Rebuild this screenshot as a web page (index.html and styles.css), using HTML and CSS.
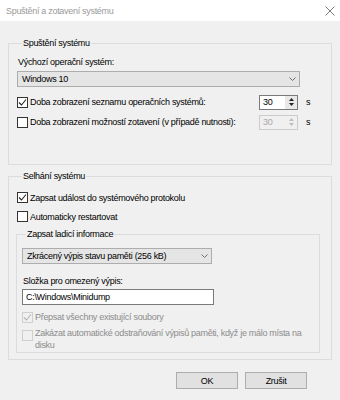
FILE: index.html
```html
<!DOCTYPE html>
<html lang="cs">
<head>
    <meta charset="UTF-8">
    <meta name="viewport" content="width=device-width, initial-scale=1.0">
    <title>Spuštění a zotavení systému</title>
    <link rel="stylesheet" href="styles.css">
</head>
<body>
    <div class="titlebar">
        <span class="title">Spuštění a zotavení systému</span>
        <svg class="close" width="10" height="10" viewBox="0 0 10 10">
            <path d="M0.5 0.5 L9.5 9.5 M9.5 0.5 L0.5 9.5" stroke="#7a7a7a" stroke-width="1" fill="none"/>
        </svg>
    </div>

    <div class="dialog">
        <fieldset class="group group-start">
            <legend>Spuštění systému</legend>
            <div class="label">Výchozí operační systém:</div>
            <div class="combo combo-wide">
                <span>Windows 10</span>
                <svg class="chevron" width="7" height="4" viewBox="0 0 7 4"><path d="M0.5 0.5 L3.5 3.5 L6.5 0.5" stroke="#6e6e6e" fill="none"/></svg>
            </div>
            <div class="row row-first">
                <span class="check checked"><svg width="9" height="9" viewBox="0 0 9 9"><path d="M1 4.5 L3.5 7 L8 1.5" stroke="#222" stroke-width="1.1" fill="none"/></svg></span>
                <span class="row-text">Doba zobrazení seznamu operačních systémů:</span>
                <div class="spin">
                    <span class="spin-value">30</span>
                    <span class="spin-btns">
                        <svg width="5" height="3" viewBox="0 0 5 3"><path d="M0 3 L2.5 0 L5 3 Z" fill="#222"/></svg>
                        <svg width="5" height="3" viewBox="0 0 5 3"><path d="M0 0 L2.5 3 L5 0 Z" fill="#222"/></svg>
                    </span>
                </div>
                <span class="unit">s</span>
            </div>
            <div class="row">
                <span class="check"></span>
                <span class="row-text">Doba zobrazení možností zotavení (v případě nutnosti):</span>
                <div class="spin disabled">
                    <span class="spin-value">30</span>
                    <span class="spin-btns">
                        <svg width="5" height="3" viewBox="0 0 5 3"><path d="M0 3 L2.5 0 L5 3 Z" fill="#bcbcbc"/></svg>
                        <svg width="5" height="3" viewBox="0 0 5 3"><path d="M0 0 L2.5 3 L5 0 Z" fill="#bcbcbc"/></svg>
                    </span>
                </div>
                <span class="unit">s</span>
            </div>
        </fieldset>

        <fieldset class="group group-fail">
            <legend>Selhání systému</legend>
            <div class="row row-tight">
                <span class="check checked"><svg width="9" height="9" viewBox="0 0 9 9"><path d="M1 4.5 L3.5 7 L8 1.5" stroke="#222" stroke-width="1.1" fill="none"/></svg></span>
                <span class="row-text">Zapsat událost do systémového protokolu</span>
            </div>
            <div class="row row-tight">
                <span class="check"></span>
                <span class="row-text">Automaticky restartovat</span>
            </div>

            <fieldset class="group group-debug">
                <legend>Zapsat ladicí informace</legend>
                <div class="combo combo-narrow">
                    <span>Zkrácený výpis stavu paměti (256 kB)</span>
                    <svg class="chevron" width="7" height="4" viewBox="0 0 7 4"><path d="M0.5 0.5 L3.5 3.5 L6.5 0.5" stroke="#6e6e6e" fill="none"/></svg>
                </div>
                <div class="label label-folder">Složka pro omezený výpis:</div>
                <div class="textbox">C:\Windows\Minidump</div>
                <div class="row row-small">
                    <span class="check disabled"><svg width="9" height="9" viewBox="0 0 9 9"><path d="M1 4.5 L3.5 7 L8 1.5" stroke="#b5b5b5" stroke-width="1.1" fill="none"/></svg></span>
                    <span class="row-text muted">Přepsat všechny existující soubory</span>
                </div>
                <div class="row row-multi">
                    <span class="check disabled"></span>
                    <span class="row-text muted">Zakázat automatické odstraňování výpisů paměti, když je málo místa na disku</span>
                </div>
            </fieldset>
        </fieldset>

        <div class="buttons">
            <button class="btn">OK</button>
            <button class="btn">Zrušit</button>
        </div>
    </div>
    <div class="bottom-edge"></div>
</body>
</html>
```

FILE: styles.css
```css
* {
    box-sizing: border-box;
}
body {
    margin: 0;
    width: 340px;
    height: 400px;
    overflow: hidden;
    background: #f0f0f0;
    font-family: "Liberation Sans", Arial, sans-serif;
    font-size: 9px;
    letter-spacing: -0.3px;
    color: #000;
}
.titlebar {
    height: 21px;
    background: #fff;
    display: flex;
    justify-content: space-between;
    align-items: center;
    padding: 0 5px 0 6px;
}
.title {
    color: #9a9a9a;
}
.close {
    display: block;
    margin-top: 1px;
}
.dialog {
    height: 377px;
    padding: 0 8px;
}

/* --- group boxes --- */
.group {
    margin: 0;
    border: 1px solid #dcdcdc;
    padding: 5px 8px 32px 8px;
    min-width: 0;
}
.group legend {
    margin-left: 5px;
    padding: 0 1px;
    line-height: 14px;
}
.group-start {
    margin-top: 15px;
}
.group-fail {
    margin-top: 4px;
    padding: 5px 8px 6px 8px;
}
.group-debug {
    margin: 1px 0 0 -1px;
    width: 304px;
    padding: 7px 5px 1px 5px;
}
.group-debug legend {
    margin-left: 4px;
}

.label {
    line-height: 15px;
    padding-left: 1px;
}
.label-folder {
    margin-top: 10px;
    line-height: 14px;
}

/* --- combo --- */
.combo {
    height: 16px;
    background: #e5e5e5;
    border: 1px solid #adadad;
    display: flex;
    align-items: center;
    justify-content: space-between;
    padding: 0 3px 0 4px;
    line-height: 14px;
}
.combo-wide {
    margin-top: 1px;
    width: 283px;
}
.combo-narrow {
    width: 190px;
}
.chevron {
    display: block;
}

/* --- checkbox rows --- */
.row {
    display: flex;
    align-items: center;
    height: 20px;
}
.row-first {
    margin-top: 5px;
}
.row-tight {
    height: 19px;
}
.row-small {
    height: 16px;
    margin-top: 4px;
}
.row-multi {
    height: auto;
    align-items: flex-start;
    margin-top: 2px;
}
.row-multi .row-text {
    line-height: 11.5px;
    padding-top: 1px;
}
.check {
    width: 11px;
    height: 11px;
    flex: none;
    border: 1px solid #333;
    background: #fff;
    display: flex;
    align-items: center;
    justify-content: center;
    margin-right: 2px;
}
.check.disabled {
    border-color: #cfcfcf;
    background: #f0f0f0;
}
.row-multi .check {
    margin-top: 3px;
}
.row-text {
    flex: 1;
    white-space: nowrap;
}
.row-multi .row-text {
    white-space: normal;
    padding-right: 12px;
}
.muted {
    color: #8c8c8c;
}

/* --- spin box --- */
.spin {
    width: 39px;
    height: 15px;
    border: 1px solid #7a7a7a;
    background: #fff;
    display: flex;
    flex: none;
}
.spin-value {
    flex: 1;
    padding-left: 3px;
    line-height: 13px;
}
.spin-btns {
    width: 12px;
    background: #e8e8e8;
    display: flex;
    flex-direction: column;
    align-items: center;
    justify-content: space-around;
    padding: 1px 0;
}
.spin-btns svg {
    display: block;
}
.spin.disabled {
    border-color: #cccccc;
    background: #f0f0f0;
    color: #a8a8a8;
}
.spin.disabled .spin-btns {
    background: #f0f0f0;
}
.unit {
    width: 25px;
    padding-left: 8px;
    flex: none;
}

/* --- textbox --- */
.textbox {
    width: 192px;
    height: 16px;
    margin-top: 1px;
    border: 1px solid #7a7a7a;
    background: #fff;
    padding-left: 3px;
    line-height: 14px;
}

/* --- buttons --- */
.buttons {
    display: flex;
    justify-content: flex-end;
    gap: 7px;
    margin-top: 12px;
    padding-right: 25px;
}
.btn {
    width: 62px;
    height: 17px;
    background: #e1e1e1;
    border: 1px solid #adadad;
    font-family: inherit;
    font-size: 9px;
    letter-spacing: inherit;
    padding: 0;
    color: #000;
}
.bottom-edge {
    height: 2px;
    background: #acacac;
}
```
